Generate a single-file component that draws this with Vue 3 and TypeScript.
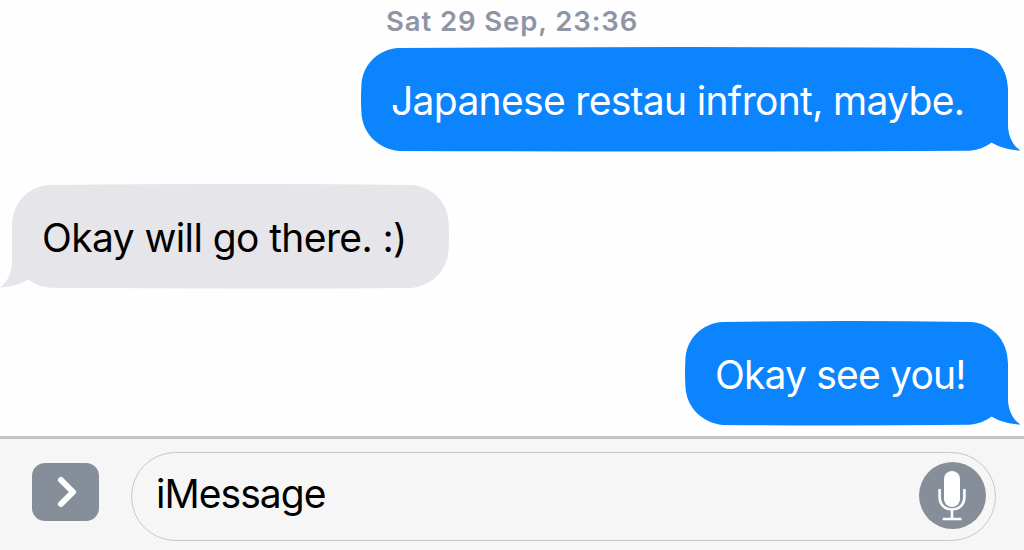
<script setup lang="ts">
interface Message {
  id: number
  text: string
  side: 'sent' | 'received'
  width: number
  fit: string
}

const messages: Message[] = [
  { id: 1, text: 'Japanese restau infront, maybe.', side: 'sent', width: 647, fit: 'long' },
  { id: 2, text: 'Okay will go there. :)', side: 'received', width: 437, fit: 'medium' },
  { id: 3, text: 'Okay see you!', side: 'sent', width: 323, fit: 'short' },
]

// Outline of a bubble whose tail points to the lower right.
function outline(w: number): string {
  return [
    `M38 2 Q${w / 2} 0.2 ${w - 38} 2`,
    `C${w - 17} 3 ${w} 19 ${w} 44`,
    `V79 C${w} 90 ${w + 5} 100 ${w + 12.5} 104.5`,
    `C${w + 2} 104.5 ${w - 9} 101 ${w - 16.5} 96.5`,
    `C${w - 23} 101.5 ${w - 30} 104 ${w - 38} 104.7`,
    `Q${w / 2} 106.2 38 105`,
    'C17 103 1 87 0.4 66 Q-0.4 53 0.4 40 C1 19 17 3 38 2Z',
  ].join(' ')
}
</script>

<template>
  <div class="chat">
    <main class="thread">
      <time class="stamp">Sat 29 Sep, 23:36</time>
      <div v-for="m in messages" :key="m.id" class="bubble" :class="m.side" :style="{ width: m.width + 'px' }">
        <svg class="shape" :width="m.width" height="107" aria-hidden="true">
          <path :d="outline(m.width)" />
        </svg>
        <span class="text" :class="m.fit">{{ m.text }}</span>
      </div>
    </main>
    <footer class="composer">
      <button class="apps" aria-label="Show apps">
        <svg width="67" height="58" viewBox="0 0 67 58">
          <path d="M29 17 41 29 29 41" fill="none" stroke="#fff" stroke-width="6" stroke-linecap="round" stroke-linejoin="round" />
        </svg>
      </button>
      <div class="field">
        <span class="placeholder">iMessage</span>
        <button class="mic" aria-label="Dictate">
          <svg width="67" height="67" viewBox="0 0 67 67">
            <rect x="25" y="9" width="16" height="36" rx="8" fill="#fff" />
            <path d="M20.6 27V34.5C20.6 43 26 47.5 33 47.5S45.4 43 45.4 34.5V27M33 47.5V57M23.7 57H42.4" fill="none" stroke="#fff" stroke-width="2.6" />
          </svg>
        </button>
      </div>
    </footer>
  </div>
</template>

<style>
body {
  margin: 0;
  overflow: hidden;
}
</style>

<style scoped>
.chat {
  box-sizing: border-box;
  width: 1024px;
  height: 550px;
  display: flex;
  flex-direction: column;
  overflow: hidden;
  background: #fefefe;
  font-family: Inter, "Liberation Sans", sans-serif;
}
.thread {
  flex: none;
  height: 436px;
  display: flex;
  flex-direction: column;
}
.stamp {
  flex: none;
  height: 46px;
  padding-left: 386px;
  box-sizing: border-box;
  line-height: 43px;
  font-size: 27.5px;
  font-weight: 600;
  letter-spacing: 0.9px;
  color: #8e95a5;
  white-space: nowrap;
}
.bubble {
  position: relative;
  flex: none;
  height: 107px;
  margin-bottom: 30px;
  box-sizing: border-box;
  padding-left: 30px;
}
.bubble:last-child {
  margin-bottom: 0;
}
.sent {
  align-self: flex-end;
  margin-right: 16px;
  color: #fff;
}
.received {
  align-self: flex-start;
  margin-left: 12px;
  color: #000;
}
.shape {
  position: absolute;
  left: 0;
  top: 0;
  overflow: visible;
  fill: #0b84fe;
}
.received .shape {
  fill: #e5e5ea;
  transform: scaleX(-1);
}
.text {
  position: relative;
  display: block;
  line-height: 110px;
  font-size: 39px;
  white-space: nowrap;
}
.long {
  letter-spacing: -0.68px;
}
.medium {
  letter-spacing: -0.6px;
}
.short {
  letter-spacing: -0.82px;
}
.composer {
  box-sizing: border-box;
  height: 114px;
  border-top: 3px solid #c3c4c4;
  padding: 13px 28px 0 32px;
  display: flex;
  gap: 32px;
  background: #f6f6f6;
}
button {
  border: 0;
  padding: 0;
  background: #868e99;
}
button svg {
  display: block;
}
.apps {
  width: 67px;
  height: 58px;
  margin-top: 11px;
  border-radius: 13px;
}
.field {
  flex: 1;
  box-sizing: border-box;
  height: 89px;
  border: 1px solid #c8c8ca;
  border-radius: 45px;
  display: flex;
  align-items: center;
  justify-content: space-between;
  padding: 0 9px 0 24px;
}
.placeholder {
  font-size: 39px;
  line-height: 80px;
  margin-top: -5px;
  letter-spacing: -0.95px;
}
.mic {
  width: 67px;
  height: 67px;
  margin-top: -2px;
  border-radius: 50%;
}
</style>
